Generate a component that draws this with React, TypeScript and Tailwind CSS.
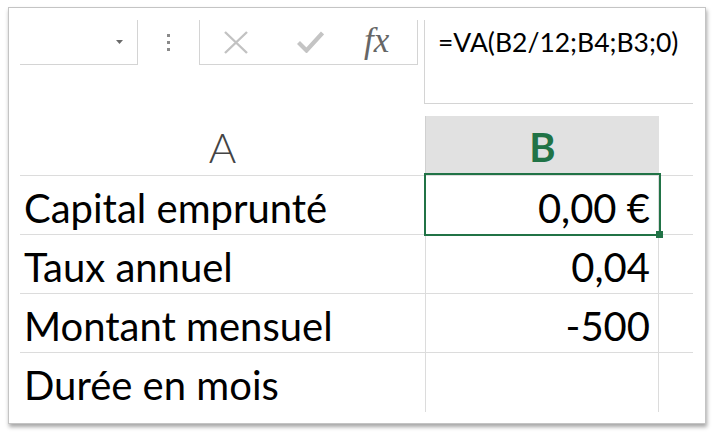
import React from "react";

const font = { fontFamily: "Lato, 'Open Sans', sans-serif" };

function Row({ label, value, selected, last }: { label: string; value?: string; selected?: boolean; last?: boolean }) {
  return (
    <div className={`flex h-[59px] ${last ? "" : "border-b border-[#dcdcdc]"}`}>
      <div className="w-[405px] flex items-center pl-[4px] pt-[5px] text-[40px] leading-none text-black">{label}</div>
      <div className="relative w-[234px] border-l border-r border-[#dcdcdc] flex items-center justify-end pr-[8px] pt-[5px] text-[40px] leading-none text-black">
        {value}
        {selected && (
          <div className="absolute z-10 left-[-2px] top-[-3px] w-[237px] h-[63px] border-2 border-[#217346]">
            <div className="absolute z-20 right-[-4px] bottom-[-4px] w-[7px] h-[7px] bg-[#217346]" />
          </div>
        )}
      </div>
      <div className="flex-1" />
    </div>
  );
}

export default function App() {
  return (
    <div className="w-[715px] h-[438px] bg-white overflow-hidden" style={font}>
      <div className="ml-[8px] mt-[7px] w-[698px] h-[417px] border border-[#c4c4c4] bg-white shadow-[1px_3px_4px_rgba(0,0,0,0.35)]">
        {/* formula bar */}
        <div className="flex pt-[12px] pl-[11px]">
          <div className="w-[118px] h-[45px] border-r border-b border-[#d4d4d4] flex items-center justify-end pr-[14px]">
            <svg width="7" height="4" viewBox="0 0 7 4"><path d="M0 0h7L3.5 4z" fill="#6a6a6a" /></svg>
          </div>
          <div className="w-[61px] h-[45px] flex flex-col items-center justify-center gap-[4px]">
            <div className="w-[3px] h-[3px] bg-[#8a8a8a]" />
            <div className="w-[3px] h-[3px] bg-[#8a8a8a]" />
            <div className="w-[3px] h-[3px] bg-[#8a8a8a]" />
          </div>
          <div className="w-[219px] h-[45px] border-l border-r border-b border-[#d4d4d4] flex items-center">
            <svg className="ml-[24px]" width="24" height="23" viewBox="0 0 24 23">
              <path d="M1 1L23 22M23 1L1 22" stroke="#c2c2c2" strokeWidth="2.4" fill="none" />
            </svg>
            <svg className="ml-[49px]" width="27" height="22" viewBox="0 0 27 22">
              <path d="M1.5 11.5L9.5 19.5L25.5 2" stroke="#c4c4c4" strokeWidth="4.2" fill="none" />
            </svg>
            <div className="ml-[40px] text-[35px] italic leading-none text-[#666666] pb-[3px]" style={{ fontFamily: "'Liberation Serif', serif" }}>
              fx
            </div>
          </div>
          <div className="w-[6px]" />
          <div className="w-[269px] h-[84px] border-l border-b border-[#d4d4d4] pl-[13px] pt-[9px] text-[26.5px] leading-none text-black">
            =VA(B2/12;B4;B3;0)
          </div>
        </div>
        {/* grid */}
        <div className="ml-[11px] mt-[12px] w-[673px]">
          <div className="flex h-[60px] border-b border-[#dcdcdc]">
            <div className="w-[405px] flex items-center justify-center text-[42px] font-light leading-none text-[#444444] pt-[2px]">A</div>
            <div className="w-[234px] bg-[#e1e1e1] border-l border-[#d0d0d0] flex items-center justify-center text-[40px] font-bold leading-none text-[#217346] pt-[2px]">B</div>
            <div className="flex-1" />
          </div>
          <Row label="Capital emprunté" value="0,00 €" selected />
          <Row label="Taux annuel" value="0,04" />
          <Row label="Montant mensuel" value="-500" />
          <Row label="Durée en mois" last />
        </div>
      </div>
    </div>
  );
}
